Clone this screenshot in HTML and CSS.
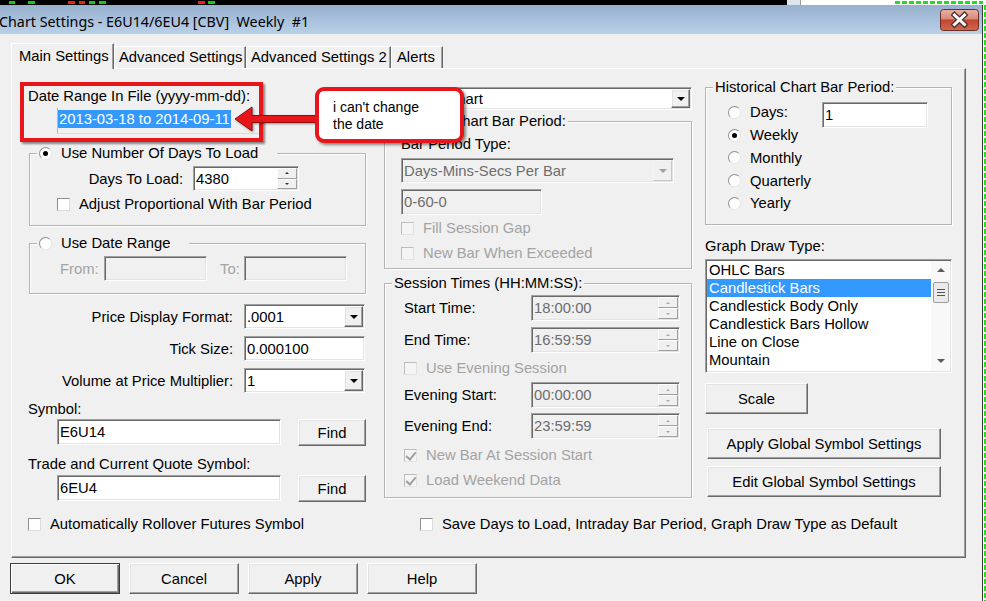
FILE: index.html
```html
<!DOCTYPE html>
<html>
<head>
<meta charset="utf-8">
<title>Chart Settings</title>
<link rel="stylesheet" href="styles.css">
</head>
<body>
<div class="screen">
  <div class="strip"></div>
  <div class="frame">
    <div class="window">
      <div class="titlebar">
        <span class="title">Chart Settings - E6U14/6EU4 [CBV]  Weekly  #1</span>
        <svg class="close" width="39" height="22" viewBox="0 0 39 22">
          <defs>
            <linearGradient id="cg" x1="0" y1="0" x2="0" y2="1">
              <stop offset="0" stop-color="#e7b2a6"/>
              <stop offset="0.45" stop-color="#d98a78"/>
              <stop offset="0.5" stop-color="#c5432c"/>
              <stop offset="1" stop-color="#cf6a52"/>
            </linearGradient>
          </defs>
          <rect x="0.5" y="0.5" width="38" height="21" rx="3" fill="url(#cg)" stroke="#6b2d27"/>
          <path d="M14.5 6 L24.5 15.5 M24.5 6 L14.5 15.5" stroke="#4b3330" stroke-width="5.5" stroke-linecap="square"/>
          <path d="M14.5 6 L24.5 15.5 M24.5 6 L14.5 15.5" stroke="#ffffff" stroke-width="3" stroke-linecap="square"/>
        </svg>
      </div>
      <div class="body">
        <div class="tabs">
          <div class="tab sel">Main Settings</div>
          <div class="tab t2">Advanced Settings</div>
          <div class="tab t3">Advanced Settings 2</div>
          <div class="tab t4">Alerts</div>
        </div>
        <div class="panel">
          <!-- left column -->
          <div class="col c1">
            <div class="lbl l-date">Date Range In File (yyyy-mm-dd):</div>
            <div class="datefield"><span class="selected">2013-03-18 to 2014-09-11</span></div>

            <div class="grp g-days">
              <div class="legend rlegend"><span class="rb on"></span>Use Number Of Days To Load</div>
              <div class="row r-days">
                <span class="lab w-days">Days To Load:</span>
                <div class="edit spinedit se-days"><span class="val">4380</span><span class="spin"><i class="sb"></i><i class="sb dn"></i></span></div>
              </div>
              <div class="cbrow cb-adjust"><span class="cb"></span>Adjust Proportional With Bar Period</div>
            </div>

            <div class="grp g-range">
              <div class="legend rlegend"><span class="rb"></span>Use Date Range</div>
              <div class="row r-range">
                <span class="dlab l-from">From:</span>
                <div class="edit dis e-from"></div>
                <span class="dlab l-to">To:</span>
                <div class="edit dis e-to"></div>
              </div>
            </div>

            <div class="frow f-price">
              <span class="flab">Price Display Format:</span>
              <div class="edit combo"><span class="val">.0001</span><span class="dd"></span></div>
            </div>
            <div class="frow f-tick">
              <span class="flab">Tick Size:</span>
              <div class="edit"><span class="val">0.000100</span></div>
            </div>
            <div class="frow f-vol">
              <span class="flab">Volume at Price Multiplier:</span>
              <div class="edit combo"><span class="val">1</span><span class="dd"></span></div>
            </div>

            <div class="lbl l-sym">Symbol:</div>
            <div class="symrow s1">
              <div class="edit e-sym"><span class="val">E6U14</span></div>
              <div class="btn b-find">Find</div>
            </div>
            <div class="lbl l-trade">Trade and Current Quote Symbol:</div>
            <div class="symrow s2">
              <div class="edit e-sym"><span class="val">6EU4</span></div>
              <div class="btn b-find">Find</div>
            </div>
          </div>

          <!-- middle column -->
          <div class="col c2">
            <div class="edit combo c-type"><span class="val">Intraday Chart</span><span class="dd"></span></div>

            <div class="grp g-intra">
              <div class="legend">Intraday Chart Bar Period:</div>
              <div class="lbl l-bpt">Bar Period Type:</div>
              <div class="edit combo dis c-bpt"><span class="val">Days-Mins-Secs Per Bar</span><span class="dd"></span></div>
              <div class="edit dis e-bp"><span class="val">0-60-0</span></div>
              <div class="cbrow dis cb-fill"><span class="cb"></span>Fill Session Gap</div>
              <div class="cbrow dis cb-newbar"><span class="cb"></span>New Bar When Exceeded</div>
            </div>

            <div class="grp g-sess">
              <div class="legend">Session Times (HH:MM:SS):</div>
              <div class="trow t-start">
                <span class="tlab">Start Time:</span>
                <div class="edit dis spinedit se-time"><span class="val">18:00:00</span><span class="spin"><i class="sb"></i><i class="sb dn"></i></span></div>
              </div>
              <div class="trow t-end">
                <span class="tlab">End Time:</span>
                <div class="edit dis spinedit se-time"><span class="val">16:59:59</span><span class="spin"><i class="sb"></i><i class="sb dn"></i></span></div>
              </div>
              <div class="cbrow dis cb-even"><span class="cb"></span>Use Evening Session</div>
              <div class="trow t-es">
                <span class="tlab">Evening Start:</span>
                <div class="edit dis spinedit se-time"><span class="val">00:00:00</span><span class="spin"><i class="sb"></i><i class="sb dn"></i></span></div>
              </div>
              <div class="trow t-ee">
                <span class="tlab">Evening End:</span>
                <div class="edit dis spinedit se-time"><span class="val">23:59:59</span><span class="spin"><i class="sb"></i><i class="sb dn"></i></span></div>
              </div>
              <div class="cbrow dis cb-nbs"><span class="cb on"></span>New Bar At Session Start</div>
              <div class="cbrow dis cb-lwd"><span class="cb on"></span>Load Weekend Data</div>
            </div>
          </div>

          <!-- right column -->
          <div class="col c3">
            <div class="grp g-hist">
              <div class="legend">Historical Chart Bar Period:</div>
              <div class="hist-body">
                <div class="radios">
                  <div class="rrow"><span class="rb"></span>Days:</div>
                  <div class="rrow"><span class="rb on"></span>Weekly</div>
                  <div class="rrow"><span class="rb"></span>Monthly</div>
                  <div class="rrow"><span class="rb"></span>Quarterly</div>
                  <div class="rrow"><span class="rb"></span>Yearly</div>
                </div>
                <div class="edit e-period"><span class="val">1</span></div>
              </div>
            </div>

            <div class="lbl l-gdt">Graph Draw Type:</div>
            <div class="listbox">
              <div class="items">
                <div class="item">OHLC Bars</div>
                <div class="item sel">Candlestick Bars</div>
                <div class="item">Candlestick Body Only</div>
                <div class="item">Candlestick Bars Hollow</div>
                <div class="item">Line on Close</div>
                <div class="item">Mountain</div>
              </div>
              <div class="vscroll">
                <span class="arr up"></span>
                <span class="thumb"><i></i><i></i><i></i></span>
                <span class="arr down"></span>
              </div>
            </div>

            <div class="btn b-scale">Scale</div>
            <div class="btn b-global b-apply">Apply Global Symbol Settings</div>
            <div class="btn b-global b-edit">Edit Global Symbol Settings</div>
          </div>

          <div class="cbrow cb-auto"><span class="cb"></span>Automatically Rollover Futures Symbol</div>
          <div class="cbrow cb-save"><span class="cb"></span>Save Days to Load, Intraday Bar Period, Graph Draw Type as Default</div>
        </div>

        <div class="buttons">
          <div class="btn b-main b-ok">OK</div>
          <div class="btn b-main">Cancel</div>
          <div class="btn b-main">Apply</div>
          <div class="btn b-main">Help</div>
        </div>
      </div>
    </div>
    <div class="edge"></div>
  </div>

  <!-- annotation overlays -->
  <div class="note-box"></div>
  <svg class="note-arrow" width="92" height="34" viewBox="0 0 92 34">
    <polygon points="4,19 21,7 21,15.5 90,15.5 90,22.5 21,22.5 21,31" fill="#e8151b" stroke="#8a1010" stroke-width="1" stroke-linejoin="round"/>
  </svg>
  <div class="callout">i can't change<br>the date</div>
</div>
</body>
</html>
```

FILE: styles.css
```css
* { box-sizing: border-box; }
html, body { margin: 0; padding: 0; }
body {
  background: #fff;
  font-family: "Liberation Sans", Arial, sans-serif;
  font-size: 14.8px;
  color: #000;
}

.screen {
  position: relative;
  width: 986px;
  height: 601px;
  overflow: hidden;
  display: flex;
  flex-direction: column;
  background: #fff;
}

/* chart peeking behind the dialog */
.strip {
  flex: none;
  height: 5px;
  background:
    repeating-linear-gradient(90deg, #22dd22 0 5px, transparent 5px 7px) 895px 1px / 88px 3px no-repeat,
    linear-gradient(90deg, transparent 9px, #1c1 9px 15px, transparent 15px 28px, #1c1 28px 35px, transparent 35px 68px, #e21 68px 75px, transparent 75px 79px, #e21 79px 85px, transparent 85px 89px, #1c1 89px 95px, transparent 95px 99px, #1c1 99px 106px, transparent 106px 198px, #e21 198px 205px, transparent 205px 208px, #1c1 208px 215px, transparent 215px) 0 1px / 100% 3px no-repeat,
    linear-gradient(90deg, #000 0 787px, #dfe5ec 787px 800px, #9a9a9a 800px 801px, #fff 801px);
}

.frame { flex: 1; display: flex; }

.window {
  width: 983px;
  border-right: 1px solid #3a3a3a;
  display: flex;
  flex-direction: column;
}

.edge {
  flex: 1;
  background: #fff repeating-linear-gradient(#22dd22 0 5px, transparent 5px 7px) 1px 0 / 2px 100% no-repeat;
}

.titlebar {
  flex: none;
  height: 29px;
  background: linear-gradient(#97b0cd, #b9d0e9);
  display: flex;
  justify-content: space-between;
  align-items: flex-start;
}
.title {
  font-family: "Noto Sans", "Open Sans", sans-serif;
  font-size: 14.3px;
  white-space: pre;
  line-height: 25px;
  padding-top: 4px;
  margin-left: -1px;
}
.close { margin: 4px 3px 0 0; flex: none; }

.body {
  flex: 1;
  background: #f0f0f0;
  padding: 9px 0 0 11px;
  display: flex;
  flex-direction: column;
  align-items: flex-start;
}

/* tabs */
.tabs {
  display: flex;
  align-items: flex-end;
  height: 26px;
  position: relative;
  z-index: 1;
}
.tab {
  height: 22px;
  margin-bottom: 1px;
  line-height: 21px;
  border-top: 1px solid #fff;
  border-left: 1px solid #fff;
  border-right: 1px solid #696969;
  box-shadow: inset -1px 0 #a0a0a0;
  padding-left: 4px;
  white-space: nowrap;
  background: #f0f0f0;
}
.tab.sel { height: 26px; margin-bottom: 0; width: 103px; padding-left: 7px; line-height: 24px; }
.tab.t2 { width: 132px; }
.tab.t3 { width: 145px; }
.tab.t4 { width: 52px; padding-left: 5px; }

.panel {
  margin-top: -1px;
  width: 955px;
  height: 490px;
  border: 1px solid;
  border-color: #fff #696969 #696969 #fff;
  box-shadow: inset -1px -1px #a0a0a0;
  padding-left: 16px;
  display: grid;
  grid-template-columns: 356px 321px 247px;
  grid-template-rows: 447px 17px;
}

.col { display: flex; flex-direction: column; align-items: flex-start; }

.lbl { line-height: 17px; height: 17px; white-space: nowrap; }

/* generic controls */
.edit {
  background: #fff;
  border: 1px solid;
  border-color: #a0a0a0 #fff #fff #a0a0a0;
  box-shadow: inset 1px 1px #696969, inset -1px -1px #e3e3e3;
  display: flex;
  align-items: center;
  padding-left: 2px;
  height: 26px;
  white-space: nowrap;
}
.edit.dis { background: #f0f0f0; color: #6d6d6d; }

.combo { padding-right: 0; }
.dd {
  margin: 1px 1px 1px auto;
  width: 19px;
  align-self: stretch;
  border: 1px solid;
  border-color: #fff #696969 #696969 #fff;
  box-shadow: inset -1px -1px #a0a0a0, inset 1px 1px #e3e3e3;
  background: #f0f0f0;
  display: flex;
  align-items: center;
  justify-content: center;
  flex: none;
}
.dd::after {
  content: "";
  border-left: 4px solid transparent;
  border-right: 4px solid transparent;
  border-top: 4px solid #000;
}
.dis .dd { border-color: #f4f4f4 #c8c8c8 #c8c8c8 #f4f4f4; box-shadow: none; }
.dis .dd::after { border-top-color: #a0a0a0; }

.spinedit { padding-right: 0; }
.spin {
  margin: 1px 1px 1px auto;
  width: 20px;
  align-self: stretch;
  display: flex;
  flex-direction: column;
  flex: none;
}
.sb {
  flex: 1;
  border: 1px solid;
  border-color: #fff #a0a0a0 #a0a0a0 #fff;
  background: #f0f0f0;
  display: flex;
  align-items: center;
  justify-content: center;
}
.sb::after {
  content: "";
  border-left: 2px solid transparent;
  border-right: 2px solid transparent;
  border-bottom: 2px solid #333;
}
.sb.dn::after { border-bottom: 0; border-top: 2px solid #333; }
.dis .sb::after { border-bottom-color: #a8a8a8; }
.dis .sb.dn::after { border-top-color: #a8a8a8; }

.cbrow {
  display: flex;
  align-items: center;
  height: 17px;
  line-height: 17px;
  white-space: nowrap;
}
.cb {
  position: relative;
  flex: none;
  width: 13px;
  height: 13px;
  margin-right: 9px;
  background: #fff;
  border: 1px solid;
  border-color: #8f8f8f #dcdcdc #dcdcdc #8f8f8f;
}
.cbrow.dis { color: #a3a3a3; }
.cbrow.dis .cb { background: #f4f4f4; border-color: #bdbdbd #e2e2e2 #e2e2e2 #bdbdbd; }
.cb.on::after {
  content: "";
  position: absolute;
  left: 3px;
  top: 0;
  width: 4px;
  height: 8px;
  border: solid #a0a0a0;
  border-width: 0 2px 2px 0;
  transform: rotate(40deg);
}

.rb {
  flex: none;
  width: 13px;
  height: 13px;
  margin-right: 9px;
  border-radius: 50%;
  background: #fff;
  border: 1px solid;
  border-color: #8f8f8f #e6e6e6 #e6e6e6 #8f8f8f;
  display: flex;
  align-items: center;
  justify-content: center;
}
.rb.on::after {
  content: "";
  width: 5px;
  height: 5px;
  border-radius: 50%;
  background: #000;
}

.btn {
  display: flex;
  align-items: center;
  justify-content: center;
  background: #f0f0f0;
  border: 1px solid;
  border-color: #fff #696969 #696969 #fff;
  box-shadow: inset -1px -1px #a0a0a0, inset 1px 1px #e3e3e3;
  white-space: nowrap;
}

.grp {
  border: 1px solid #b4b4b4;
  box-shadow: inset 1px 1px #fff, 1px 1px #fff;
  display: flex;
  flex-direction: column;
  align-items: flex-start;
}
.legend {
  margin: -9px 0 0 7px;
  padding: 0 2px;
  height: 17px;
  line-height: 17px;
  background: #f0f0f0;
  display: flex;
  align-items: center;
  white-space: nowrap;
}
.rlegend { padding-right: 19px; }

/* left column */
.l-date { margin-top: 19px; }
.datefield {
  margin: 3px 0 0 29px;
  width: 205px;
  height: 26px;
  border-left: 1px solid #b9b9b9;
  border-bottom: 1px solid #dcdcdc;
  padding-top: 2px;
}
.selected {
  display: inline-block;
  background: #3399ff;
  color: #fff;
  line-height: 18px;
  height: 18px;
  padding: 0 1px;
  white-space: nowrap;
}

.g-days { margin: 19px 0 0 1px; width: 337px; height: 73px; }
.row { display: flex; align-items: center; }
.r-days { margin-top: 4px; }
.w-days { width: 153px; text-align: right; }
.se-days { margin-left: 10px; width: 106px; height: 25px; }
.cb-adjust { margin: 5px 0 0 27px; }

.g-range { margin: 17px 0 0 1px; width: 337px; height: 51px; }
.r-range { margin-top: 4px; }
.dlab { color: #a3a3a3; }
.l-from { margin-left: 30px; width: 44px; }
.e-from, .e-to { width: 103px; height: 25px; }
.l-to { margin-left: 13px; width: 24px; }

.frow {
  display: grid;
  grid-template-columns: 205px 121px;
  column-gap: 11px;
  align-items: center;
}
.flab { text-align: right; white-space: nowrap; }
.frow .edit { height: 25px; }
.f-price { margin-top: 10px; }
.f-tick { margin-top: 7px; }
.f-vol { margin-top: 7px; }

.l-sym { margin-top: 8px; }
.symrow { display: flex; align-items: flex-start; margin-top: 1px; }
.e-sym { margin-left: 29px; width: 224px; height: 26px; }
.b-find { margin-left: 17px; width: 68px; height: 27px; }
.l-trade { margin-top: 10px; }
.symrow.s2 { margin-top: 2px; }

/* middle column */
.c-type { margin-top: 18px; width: 308px; height: 23px; }
.c-type .val { padding-left: 2px; }

.g-intra { margin-top: 11px; width: 308px; height: 148px; }
.l-bpt { margin: 6px 0 0 16px; }
.c-bpt { margin: 5px 0 0 16px; width: 273px; height: 25px; }
.e-bp { margin: 6px 0 0 16px; width: 141px; height: 26px; }
.cb-fill { margin: 5px 0 0 16px; }
.cb-newbar { margin: 8px 0 0 16px; }

.g-sess { margin-top: 14px; width: 308px; height: 215px; }
.trow { display: flex; align-items: center; margin-left: 19px; }
.tlab { width: 127px; }
.se-time { width: 149px; height: 26px; }
.t-start { margin-top: 3px; }
.t-end { margin-top: 6px; }
.cb-even { margin: 7px 0 0 19px; }
.t-es { margin-top: 5px; }
.t-ee { margin-top: 5px; }
.cb-nbs { margin: 8px 0 0 19px; }
.cb-lwd { margin: 8px 0 0 19px; }

/* right column */
.g-hist { margin-top: 18px; width: 247px; height: 138px; }
.hist-body { display: flex; margin-top: 5px; padding-left: 22px; }
.radios { width: 94px; }
.rrow { height: 22.75px; display: flex; align-items: center; white-space: nowrap; }
.e-period { margin-top: 1px; width: 106px; height: 26px; }

.l-gdt { margin-top: 13px; }
.listbox {
  margin-top: 4px;
  width: 247px;
  height: 114px;
  background: #fff;
  border: 1px solid;
  border-color: #a0a0a0 #fff #fff #a0a0a0;
  box-shadow: inset 1px 1px #696969, inset -1px -1px #e3e3e3;
  padding: 1px;
  display: flex;
}
.items { flex: 1; }
.item { height: 18px; line-height: 18px; padding-left: 2px; white-space: nowrap; }
.item.sel { background: #3399ff; color: #fff; }
.vscroll {
  width: 19px;
  background: #f8f8f8;
  display: flex;
  flex-direction: column;
  align-items: center;
}
.arr { height: 17px; display: flex; align-items: center; justify-content: center; }
.arr::after {
  content: "";
  border-left: 4px solid transparent;
  border-right: 4px solid transparent;
}
.arr.up::after { border-bottom: 4px solid #5a5a5a; }
.arr.down { margin-top: auto; margin-bottom: 2px; }
.arr.down::after { border-top: 4px solid #5a5a5a; }
.thumb {
  margin-top: 4px;
  width: 16px;
  height: 21px;
  background: #eaeaea;
  border: 1px solid #9c9c9c;
  border-radius: 2px;
  display: flex;
  flex-direction: column;
  align-items: center;
  justify-content: center;
  gap: 2px;
}
.thumb i { width: 8px; height: 1px; background: #555; }

.b-scale { margin-top: 10px; width: 103px; height: 31px; }
.b-global { margin-left: 2px; width: 234px; height: 31px; }
.b-apply { margin-top: 14px; }
.b-edit { margin-top: 7px; }

.cb-auto { grid-column: 1; grid-row: 2; }
.cb-save { grid-column: 2 / span 2; grid-row: 2; margin-left: 36px; }

/* dialog buttons */
.buttons { display: flex; gap: 9px; margin: 5px 0 0 -1px; }
.b-main { width: 110px; height: 31px; }
.b-ok {
  border: 1px solid #3c3c3c;
  box-shadow: inset 1px 1px #fff, inset -1px -1px #696969, inset -2px -2px #a0a0a0;
}

/* annotation overlays */
.note-box {
  position: absolute;
  left: 20px;
  top: 82px;
  width: 243px;
  height: 60px;
  border: 4px solid #e8151b;
  box-shadow: 2px 2px 2px rgba(0, 0, 0, 0.45);
}
.note-arrow {
  position: absolute;
  left: 231px;
  top: 100px;
  filter: drop-shadow(1px 1px 1px rgba(0, 0, 0, 0.4));
}
.callout {
  position: absolute;
  left: 315px;
  top: 87px;
  width: 149px;
  height: 56px;
  background: #fff;
  border: 4px solid #e8151b;
  border-radius: 9px;
  box-shadow: 2px 2px 3px rgba(0, 0, 0, 0.45);
  padding: 8px 0 0 14px;
  font-size: 14px;
  line-height: 17px;
}
```
